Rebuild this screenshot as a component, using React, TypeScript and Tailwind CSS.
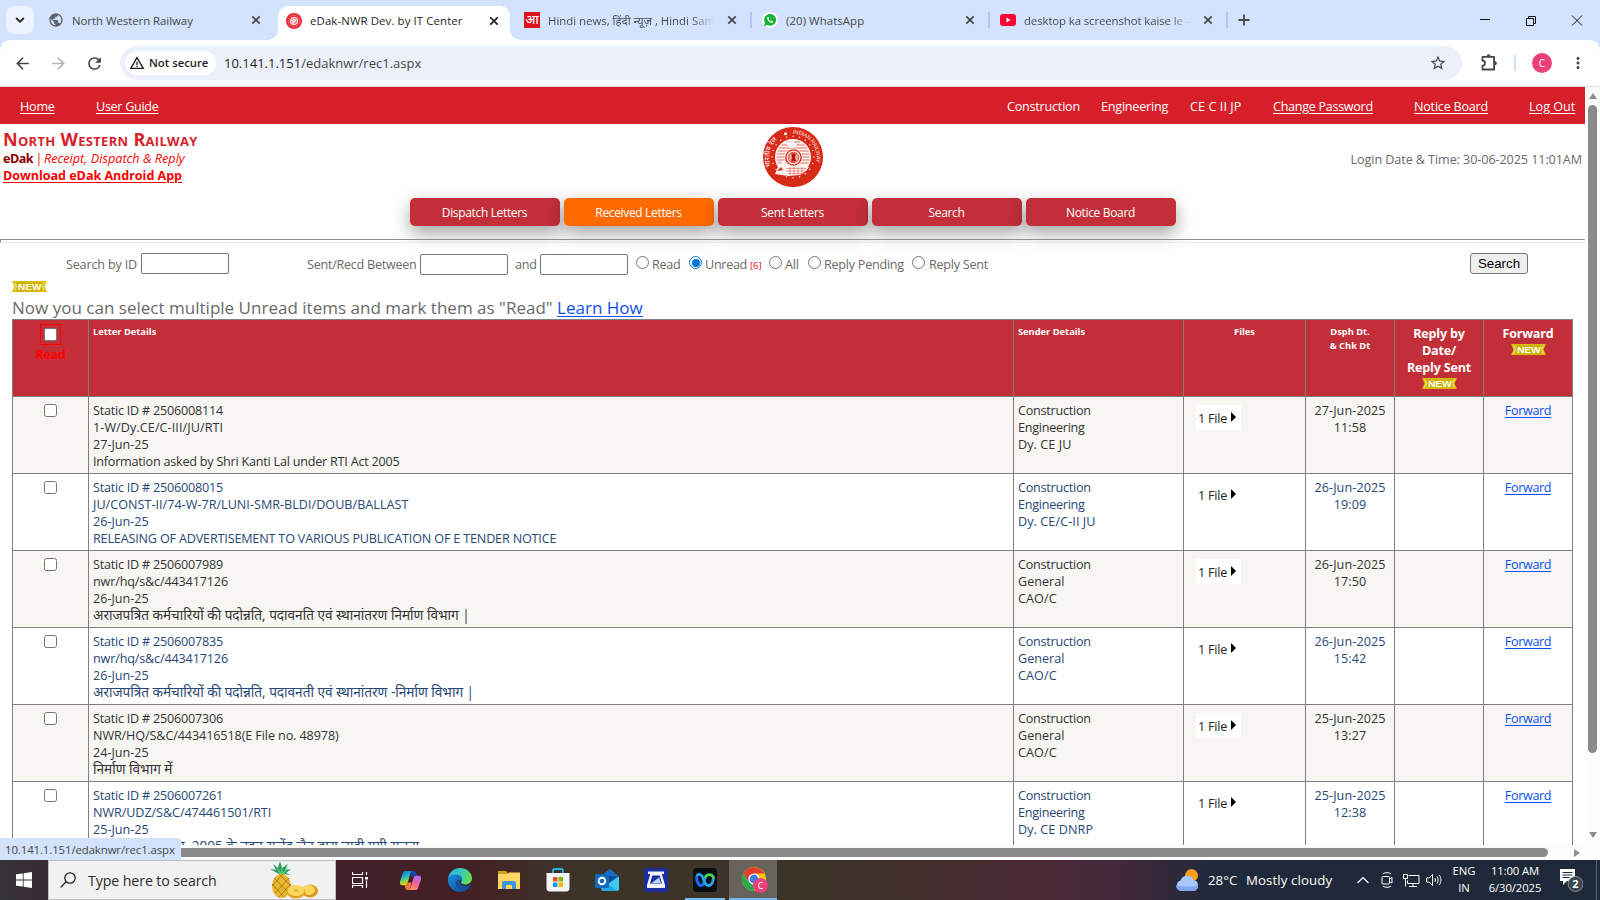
import React from "react";
import { IoLogoWhatsapp } from "react-icons/io";
import { MdStarBorder, MdRefresh, MdArrowBack, MdArrowForward, MdMoreVert, MdWarningAmber, MdPublic } from "react-icons/md";

const svg = "shrink-0 block";

function RailLogo({ className }: { className: string }) {
  const dots = Array.from({ length: 20 }, (_, i) => (i * Math.PI) / 10);
  return (
    <svg viewBox="0 0 60 60" className={className}>
      <defs>
        <path id="arcL" d="M8 39.500 A24 24 0 0 1 23 7.800" />
        <path id="arcR" d="M30 6.800 A23.300 23.300 0 0 1 52.500 36.500" />
      </defs>
      <circle cx="30" cy="30" r="30" fill="#d82a18" />
      {dots.map((a) => (
        <circle key={a} cx={30 + 20.8 * Math.cos(a)} cy={30 + 20.8 * Math.sin(a)} r="0.8" fill="#f7cfc9" />
      ))}
      <circle cx="22.500" cy="6.800" r="1.500" fill="#fff" />
      <text fontSize="7" fill="#fff" fontFamily="Noto Sans, Open Sans, sans-serif">
        <textPath href="#arcL">भारतीय रेल</textPath>
      </text>
      <text fontSize="5.600" fill="#fbe3df" fontFamily="Liberation Sans, sans-serif">
        <textPath href="#arcR" textLength="42">INDIAN RAILWAY</textPath>
      </text>
      <circle cx="30" cy="30" r="18" fill="#fdf3f1" />
      {[15, 18, 21, 24, 27, 30, 33, 36].map((y) => {
        const h = Math.sqrt(16.5 * 16.5 - (y - 30) * (y - 30));
        return <line key={y} x1={30 - h} x2={30 + h} y1={y} y2={y} stroke="#e0604f" strokeWidth="0.9" />;
      })}
      <path d="M23 15l7-1 5 6-8 1z" fill="#fff" />
      <circle cx="30.500" cy="30.500" r="9" fill="#fdf3f1" />
      <circle cx="30.500" cy="30.500" r="7.600" fill="none" stroke="#d82a18" strokeWidth="1.400" />
      <circle cx="30.500" cy="30.500" r="5.300" fill="#f0a59b" stroke="#d82a18" strokeWidth="0.800" />
      <path d="M28 26.500h5l-1.200 3.500 1.200 4.500h-5l1.200-4.500z" fill="#b81208" />
      <path d="M12 47l3-7 6-7 3 6 14 1 8 0-3 4-6 4-12 1z" fill="#fdf3f1" />
      <path d="M23 41.500h20M23 44h19M25 46.500h14M27 40v8M31 40v8M35 40v8M39 40v7" stroke="#e0604f" strokeWidth="0.600" />
      <path d="M15 43l3-3 2 3-5 1z" fill="#d82a18" />
    </svg>
  );
}

function Close({ active = false }: { active?: boolean }) {
  return (
    <svg viewBox="0 0 10 10" className={`${svg} size-2.5`}>
      <path d="M1.300 1.300L8.700 8.700M8.700 1.300L1.300 8.700" stroke={active ? "#1f1f1f" : "#444746"} strokeWidth="1.700" />
    </svg>
  );
}

function TabStrip() {
  const title = "overflow-hidden whitespace-nowrap text-[11.400px] leading-5 shrink-0 pt-px";
  const sep = "h-4 w-0.5 shrink-0 bg-[#a8c7fa]";
  return (
    <div className="flex h-10 shrink-0 items-center bg-[#d3e3fd] text-[#444746]">
      <div className="ml-1.5 flex size-7 shrink-0 items-center justify-center rounded-[9px] bg-[#ecf3fe]">
        <svg viewBox="0 0 10 10" className="size-2.5"><path d="M1.200 3L5 6.800 8.800 3" fill="none" stroke="#1f1f1f" strokeWidth="1.800" /></svg>
      </div>
      <MdPublic className="ml-3.5 size-4 shrink-0 text-[#5f6368]" />
      <div className={`${title} ml-2 w-[179px] tracking-[-0.03px]`}>North Western Railway</div>
      <Close />
      <div className="relative ml-[17px] flex h-[34px] w-[232px] shrink-0 items-center self-end rounded-t-[10px] bg-white">
        <svg viewBox="0 0 10 10" className="absolute bottom-0 -left-2.5 size-2.5"><path d="M0 10A10 10 0 0 0 10 0V10z" fill="#fff" /></svg>
        <svg viewBox="0 0 10 10" className="absolute -right-2.5 bottom-0 size-2.5"><path d="M10 10A10 10 0 0 1 0 0V10z" fill="#fff" /></svg>
        <svg viewBox="0 0 16 16" className={`${svg} mb-[5px] ml-2 size-4`}>
          <circle cx="8" cy="8" r="8" fill="#ea2330" />
          <circle cx="8" cy="8" r="5.800" fill="none" stroke="#fbd0d2" strokeWidth="0.800" strokeDasharray="1 1" />
          <circle cx="8" cy="8" r="3.800" fill="#f58d92" stroke="#fff" strokeWidth="0.900" />
          <path d="M7 11V6.500h2v2H7" fill="none" stroke="#fff" />
        </svg>
        <div className={`${title} mb-1.5 ml-2 w-[179px] pt-[2px] tracking-[0.11px] text-[#1f1f1f]`}>eDak-NWR Dev. by IT Center</div>
        <div className="mb-1.5 pt-px"><Close active /></div>
      </div>
      <div className="ml-[14px] flex size-4 shrink-0 items-center justify-center bg-[#d7151c] font-['Noto_Sans',sans-serif] text-[12.500px] leading-4 font-medium text-white">आ</div>
      <div className={`${title} ml-2 w-[167px] bg-gradient-to-r from-[#444746] from-86% to-[#44474600] bg-clip-text text-transparent`}>Hindi news, हिंदी न्यूज़ , Hindi Samachar</div>
      <div className="ml-3"><Close /></div>
      <div className={`${sep} ml-[13px]`} />
      <div className="ml-2.5 flex size-4 shrink-0 items-center justify-center rounded-full bg-white">
        <IoLogoWhatsapp className="size-3.5 text-[#17b43c]" />
      </div>
      <div className={`${title} ml-2 w-[179px] tracking-[0.08px]`}>(20) WhatsApp</div>
      <Close />
      <div className={`${sep} ml-[13px]`} />
      <svg viewBox="0 0 16 16" className={`${svg} ml-2.5 size-4`}>
        <rect y="2" width="16" height="12" rx="3" fill="#ff0033" /><path d="M6.300 5.500L10.600 8l-4.300 2.500z" fill="#fff" />
      </svg>
      <div className={`${title} ml-2 w-[167px] bg-gradient-to-r from-[#444746] from-88% to-[#44474600] bg-clip-text tracking-[-0.1px] text-transparent`}>desktop ka screenshot kaise le - YouTube</div>
      <div className="ml-3"><Close /></div>
      <div className={`${sep} ml-[13px]`} />
      <svg viewBox="0 0 12 12" className={`${svg} ml-2.5 size-3`}><path d="M6 .5v11M.5 6h11" stroke="#444746" strokeWidth="1.800" /></svg>
      <svg viewBox="0 0 110 12" className={`${svg} mr-4 ml-auto h-3 w-[110px]`} fill="none" stroke="#111">
        <path d="M6 5.500h10" />
        <path d="M52.500 4.500h7v7h-7zM54.500 4.500v-2h7v7h-2" />
        <path d="M98 1.500l10 10M108 1.500l-10 10" />
      </svg>
    </div>
  );
}

function Toolbar() {
  return (
    <div className="bg-[#d3e3fd]">
      <div className="flex h-[47px] shrink-0 items-start rounded-t-[10px] border-b border-[#dcdfe3] bg-white pt-1.5 text-[#444746]">
        <div className="flex h-[34px] w-[120px] shrink-0 items-center">
          <MdArrowBack className="ml-[12.5px] size-[19px]" />
          <MdArrowForward className="ml-[17px] size-[19px] text-[#b4b5b5]" />
          <MdRefresh className="ml-[17px] size-[19px]" />
        </div>
        <div className="flex h-[34px] w-[1342px] shrink-0 items-center rounded-full bg-[#ecf0fa] pr-[15px] pl-[5px]">
          <div className="flex h-6 w-[91px] items-center rounded-full bg-white pl-[4px]">
            <MdWarningAmber className="size-4 shrink-0 text-[#1f1f1f]" />
            <span className="ml-1 text-[11.300px] font-semibold whitespace-nowrap text-[#1f1f1f]">Not secure</span>
          </div>
          <div className="ml-2 pt-px text-[13px] text-[#444746]"><span className="text-[#1f1f1f]">10.141.1.151</span>/edaknwr/rec1.aspx</div>
          <MdStarBorder className="ml-auto size-[18px]" />
        </div>
        <div className="flex h-[34px] flex-1 items-center">
          <svg viewBox="0 0 20 20" className="ml-[17px] size-5 shrink-0" fill="none" stroke="#444746" strokeWidth="1.800"><path d="M3.500 3.900h11.600v12.600H3.500v-3.800a2.500 2.500 0 0 0 0-5z" strokeLinejoin="round" /><path d="M7.600 3.200a2 2 0 0 1 4 0zM15.900 8.200a2 2 0 0 1 0 4z" fill="#444746" stroke="none" /></svg>
          <div className="ml-[15px] h-4 w-0.5 bg-[#d3e3fd]" />
          <div className="ml-4 flex size-5 items-center justify-center rounded-full bg-[#ec407a] text-[10px] text-white">C</div>
          <MdMoreVert className="ml-[17px] size-[18px]" />
        </div>
      </div>
    </div>
  );
}

function NewBadge({ className = "" }: { className?: string }) {
  return (
    <svg viewBox="0 0 35 11" className={`block h-[11px] w-[35px] ${className}`}>
      <path d="M0 0h35l-2.500 5.500L35 11H0l2.500-5.500z" fill="#d8bd05" />
      <path d="M5 1h25v9H5z" fill="#cfb200" />
      <path d="M2.500 1.500l2 4-2 4M32.500 1.500l-2 4 2 4" stroke="#fff4b0" fill="none" strokeWidth="0.800" />
      <text x="6" y="9" fontSize="9.500" fontWeight="bold" fill="#fff" textLength="23.500" lengthAdjust="spacingAndGlyphs" fontFamily="Liberation Sans, sans-serif">NEW</text>
    </svg>
  );
}

function SiteHeader() {
  const a = "shrink-0 whitespace-nowrap underline underline-offset-2";
  const b = "shrink-0 whitespace-nowrap";
  const buttons = ["Dispatch Letters", "Received Letters", "Sent Letters", "Search", "Notice Board"];
  return (
    <>
      <div className="flex h-[37px] shrink-0 items-center bg-[#d71f29] pt-[3px] pl-5 text-[12.600px] tracking-[-0.22px] text-white">
        <div className={`${a} w-[76px]`}>Home</div>
        <div className={`${a} tracking-[-0.3px]`}>User Guide</div>
        <div className="ml-auto flex">
          <div className={`${b} w-[94px]`}>Construction</div>
          <div className={`${b} w-[89px]`}>Engineering</div>
          <div className={`${b} w-[83px] tracking-[0.08px]`}>CE C II JP</div>
          <div className={`${a} w-[141px] tracking-[-0.3px]`}>Change Password</div>
          <div className={`${a} w-[115px]`}>Notice Board</div>
          <div className={`${a} w-[56px] tracking-normal`}>Log Out</div>
        </div>
      </div>
      <div className="flex h-[74px] shrink-0 items-start justify-between pt-[3px] pr-[3px] pl-[3px]">
        <div className="w-[760px] whitespace-nowrap">
          <div className="pt-[2px] pb-px text-[18px] leading-[20px] font-bold tracking-[0.3px] text-[#d71f29] [font-variant-caps:small-caps]">North Western Railway</div>
          <div className="text-[12.600px] leading-[17px] text-[#e00]"><b className="tracking-[-0.5px] text-[#8b0000]">eDak</b><span className="tracking-[-0.9px]"> | </span><i className="tracking-[0.04px] text-[#f00]">Receipt, Dispatch &amp; Reply</i></div>
          <div className="text-[12.600px] leading-[17px] font-bold tracking-[-0.05px] text-[#f00] underline underline-offset-2">Download eDak Android App</div>
        </div>
        <RailLogo className="size-[60px] shrink-0" />
        <div className="flex-1 pt-6 text-right text-[12.600px] leading-[18px] tracking-[-0.08px] text-[#696969]">Login Date &amp; Time: 30-06-2025 11:01AM</div>
      </div>
      <div className="flex h-7 shrink-0 gap-1 pl-[410px] text-[12px] tracking-[-0.34px] text-white">
        {buttons.map((t) => (
          <div key={t} className={`flex w-[150px] items-center justify-center rounded-[5px] pt-0.5 pr-px shadow-[0_8px_16px_0_rgba(0,0,0,0.2),0_6px_20px_0_rgba(0,0,0,0.19)] ${t === "Received Letters" ? "bg-[#ff6a00]" : "bg-[#c22f38]"}`}>{t}</div>
        ))}
      </div>
      <div className="relative mt-[13px] h-1 w-[1585px] shrink-0 border border-t-[#8d8d8d] border-r-[#eee] border-b-[#e9e9e9] border-l-[#8d8d8d]" />
    </>
  );
}

function Radio({ on = false, className = "" }: { on?: boolean; className?: string }) {
  return (
    <span className={`mb-[3px] flex size-[13px] shrink-0 items-center justify-center rounded-full border bg-white ${on ? "border-[#0075d8]" : "border-[#767676]"} ${className}`}>
      {on && <span className="size-2 rounded-full bg-[#0075d8]" />}
    </span>
  );
}

function SearchRow() {
  const field = "h-[21px] w-[88px] shrink-0 rounded-xs border border-[#767676] bg-white";
  const t = "shrink-0 whitespace-nowrap pt-[3px]";
  return (
    <div className="flex h-[42px] shrink-0 items-center pl-[66px] text-[12.600px] tracking-[-0.18px] text-[#696969]">
      <div className={`${t} w-[75px]`}>Search by ID</div>
      <div className={`${field} mb-0.5`} />
      <div className={`${t} ml-[78px] w-[113px] tracking-[-0.26px]`}>Sent/Recd Between</div>
      <div className={field} />
      <div className={`${t} ml-[7px] w-[25px]`}>and</div>
      <div className={field} />
      <Radio className="ml-2" /><div className={`${t} ml-[3px] w-[37px] tracking-[-0.3px]`}>Read</div>
      <Radio on /><div className={`${t} ml-[3px] w-[45px] tracking-[-0.3px]`}>Unread</div>
      <div className={`${t} mt-px w-[19px] text-[9.500px] tracking-normal text-[#d00]`}>[6]</div>
      <Radio /><div className={`${t} ml-[3px] w-[23px]`}>All</div>
      <Radio /><div className={`${t} ml-[3px] w-[88px] tracking-[-0.25px]`}>Reply Pending</div>
      <Radio /><div className={`${t} ml-1 tracking-[-0.25px]`}>Reply Sent</div>
      <div className="mr-[57px] mb-0.5 ml-auto flex h-[21px] w-[58px] items-center justify-center rounded-[3px] border border-[#767676] bg-[#efefef] pt-px font-['Liberation_Sans',Arial,sans-serif] text-[13.300px] tracking-normal text-black">Search</div>
    </div>
  );
}

const wide = "tracking-[0.08px]";
const none = "tracking-normal";
const hindi = "-mt-px text-[13.600px] tracking-[-0.01px]";
const rows = [
  { id: "2506008114", ref: "1-W/Dy.CE/C-III/JU/RTI", refCls: "tracking-[0.08px]", date: "27-Jun-25", subj: "Information asked by Shri Kanti Lal under RTI Act 2005", subjCls: "tracking-[-0.22px]", dept: "Engineering", who: "Dy. CE JU", d: "27-Jun-2025", t: "11:58" },
  { id: "2506008015", ref: "JU/CONST-II/74-W-7R/LUNI-SMR-BLDI/DOUB/BALLAST", refCls: "tracking-[0.02px]", date: "26-Jun-25", subj: "RELEASING OF ADVERTISEMENT TO VARIOUS PUBLICATION OF E TENDER NOTICE", subjCls: "tracking-[-0.17px]", dept: "Engineering", who: "Dy. CE/C-II JU", d: "26-Jun-2025", t: "19:09" },
  { id: "2506007989", ref: "nwr/hq/s&c/443417126", refCls: "tracking-[-0.15px]", date: "26-Jun-25", subj: "अराजपत्रित कर्मचारियों की पदोन्नति, पदावनति एवं स्थानांतरण निर्माण विभाग |", subjCls: hindi, dept: "General", who: "CAO/C", d: "26-Jun-2025", t: "17:50" },
  { id: "2506007835", ref: "nwr/hq/s&c/443417126", refCls: "tracking-[-0.15px]", date: "26-Jun-25", subj: "अराजपत्रित कर्मचारियों की पदोन्नति, पदावनती एवं स्थानांतरण -निर्माण विभाग |", subjCls: hindi, dept: "General", who: "CAO/C", d: "26-Jun-2025", t: "15:42" },
  { id: "2506007306", ref: "NWR/HQ/S&C/443416518(E File no. 48978)", refCls: "tracking-[-0.1px]", date: "24-Jun-25", subj: "निर्माण विभाग में", subjCls: hindi, dept: "General", who: "CAO/C", d: "25-Jun-2025", t: "13:27" },
  { id: "2506007261", ref: "NWR/UDZ/S&C/474461501/RTI", refCls: "tracking-[-0.07px]", date: "25-Jun-25", subj: "सूचना का अधिकार, 2005 के तहत राजेंद्र जैन द्वारा चाही गयी सूचना", subjCls: hindi, dept: "Engineering", who: "Dy. CE DNRP", d: "25-Jun-2025", t: "12:38" },
];

const grid = "grid h-[77px] shrink-0 grid-cols-[76px_925px_170px_122px_89px_89px_90px] border-b border-[#808080]";
const cell = "border-l border-[#808080] pt-[5px] last:border-r whitespace-nowrap";
const small = "text-[9.300px] leading-[14px]";

function LetterTable() {
  return (
    <div className="ml-3 flex w-[1561px] shrink-0 flex-col border-t border-[#808080] text-[12.600px] leading-[17px]">
      <div className={`${grid} bg-[#c22f38] text-center font-bold text-white`}>
        <div className={`${cell} flex flex-col items-center`}>
          <div className="-mt-px flex size-[21px] items-center justify-center border border-[#f00]"><div className="size-[13px] rounded-xs border border-[#767676] bg-white" /></div>
          <div className="mt-px tracking-[-0.3px] text-[#f00]">Read</div>
        </div>
        <div className={`${cell} ${small} pl-1 text-left`}>Letter Details</div>
        <div className={`${cell} ${small} pl-1 text-left`}>Sender Details</div>
        <div className={`${cell} ${small}`}>Files</div>
        <div className={`${cell} ${small}`}>Dsph Dt.<br />&amp; Chk Dt</div>
        <div className={`${cell} tracking-[-0.2px]`}>Reply by<br />Date/<br />Reply Sent<NewBadge className="mx-auto mt-[2px]" /></div>
        <div className={`${cell} tracking-[-0.2px]`}>Forward<NewBadge className="mx-auto mt-[2px]" /></div>
      </div>
      {rows.map((r, i) => (
        <div key={r.id} className={`${grid} ${i % 2 ? "bg-white text-[#284775]" : "bg-[#f7f6f3] text-[#333333]"}`}>
          <div className={`${cell} pt-[7px]`}><div className="mx-auto size-[13px] rounded-[2.500px] border border-[#767676] bg-white" /></div>
          <div className={`${cell} pl-1`}>
            <div className="tracking-[-0.22px]">Static ID # {r.id}</div>
            <div className={r.refCls}>{r.ref}</div>
            <div>{r.date}</div>
            <div className={r.subjCls}>{r.subj}</div>
          </div>
          <div className={`${cell} pl-1`}>
            <div className="tracking-[-0.24px]">Construction</div>
            <div className={r.dept === "General" ? none : "tracking-[-0.26px]"}>{r.dept}</div>
            <div className={wide}>{r.who}</div>
          </div>
          <div className={`${cell} pl-3`}>
            <div className="mt-[3px] flex h-[25px] w-[45px] items-center bg-white pt-0.5 pl-[2px] text-[#222]">
              <span className="w-[33px] tracking-[-0.2px]">1 File</span>
              <svg viewBox="0 0 5 10" className="mb-[3px] h-2.5 w-[5px] shrink-0"><path d="M0 0L5 5 0 10z" fill="#000" /></svg>
            </div>
          </div>
          <div className={`${cell} text-center tracking-[0.1px]`}>{r.d}<br />{r.t}</div>
          <div className={cell} />
          <div className={`${cell} text-center tracking-[-0.36px] text-[#0a50f0] underline underline-offset-2`}>Forward</div>
        </div>
      ))}
    </div>
  );
}

function Taskbar() {
  const slot = "flex h-10 w-[49px] shrink-0 items-center justify-center";
  return (
    <div className="flex h-10 shrink-0 items-center bg-[linear-gradient(90deg,#333238_0,#3a2a30_60px,#431f28_340px,#431f25_460px,#3d3227_560px,#3a3527_780px,#42302c_900px,#4a2834_1040px,#41283a_1120px,#20293a_1210px,#1d2838_1600px)] text-white">
      <div className="flex w-12 shrink-0 justify-center">
        <svg viewBox="0 0 16 16" className="size-4" fill="#fff"><path d="M0 2.300L6.800 1.400V7.600H0zM7.600 1.300L16 0V7.600H7.600zM0 8.400h6.800v6.200L0 13.700zM7.600 8.400H16V16l-8.400-1.300z" /></svg>
      </div>
      <div className="flex h-10 w-72 shrink-0 items-center border border-[#bdbdbd] bg-[#f1f1f1] text-[#2b2b2b]">
        <svg viewBox="0 0 16 16" className="ml-[11px] size-4" fill="none" stroke="#222" strokeWidth="1.300"><circle cx="10" cy="6" r="5.200" /><path d="M6.200 9.800L.6 15.400" /></svg>
        <div className="ml-3 w-[181px] pt-px text-[14.200px] tracking-[-0.1px] whitespace-nowrap">Type here to search</div>
        <svg viewBox="0 0 50 38" className="h-[38px] w-[50px]">
          <path d="M10 13L1 8l6 1-3-6 5 4 2-7 2 7 6-4-3 6 6-1-5 4 5 2-8-1z" fill="#2a9a58" />
          <path d="M11 14L6 5l6 6 0-8 2 8 5-5-4 8z" fill="#59c47c" />
          <ellipse cx="12.500" cy="25" rx="9.500" ry="12" fill="#e8b730" />
          <path d="M5 17l14 14M3 23l12 13M10 13l12 12M20 17L6 32M22 23L10 36M14 13L3 25" stroke="#a87614" strokeWidth="0.900" />
          <ellipse cx="41" cy="30" rx="8" ry="6.500" fill="#d99a1c" /><ellipse cx="40" cy="29" rx="6" ry="5" fill="#fbd65f" />
          <ellipse cx="27" cy="31" rx="9.500" ry="6.500" fill="#dd9f1e" /><ellipse cx="27" cy="29.500" rx="8.500" ry="5.500" fill="#fbd65f" /><ellipse cx="27" cy="29.500" rx="2.500" ry="1.500" fill="#eab63a" />
        </svg>
      </div>
      <div className={slot}>
        <svg viewBox="0 0 16 16" className="mr-px size-4" fill="none" stroke="#fff"><path d="M.5 0v2.500h10V0M.5 5.500h10v6H.5zM.5 16v-2.500h10V16M14.500 0v3M14.500 8.500V16" strokeWidth="1.200" /><path d="M13 5h3v2.500h-3z" fill="#fff" stroke="none" /></svg>
      </div>
      <div className="flex h-10 w-[50px] shrink-0 items-center justify-center">
        <svg viewBox="0 0 24 24" className="ml-px size-[23px]">
          <defs>
            <linearGradient id="c1" x1="0" y1="0" x2="0.300" y2="1"><stop stopColor="#1c6be0" /><stop offset=".45" stopColor="#19b5c9" /><stop offset=".8" stopColor="#9fd13b" /><stop offset="1" stopColor="#f5d21c" /></linearGradient>
            <linearGradient id="c2" x1="0.600" y1="0" x2="0.200" y2="1"><stop stopColor="#b76bf0" /><stop offset=".5" stopColor="#f0609a" /><stop offset="1" stopColor="#ff9a52" /></linearGradient>
          </defs>
          <path d="M13 2h2.500c1.500 0 2 1 2.500 2.500L19 8h-6z" fill="#1b45b8" />
          <path d="M6.500 2H14c-1.500.5-2 2-2.500 4L9 14c-.6 2-1.500 3-3.500 3H3.500C1 17 .5 15 1.200 12.500L4 4.500C4.600 3 5 2 6.500 2z" fill="url(#c1)" />
          <path d="M17.500 22H10c1.500-.5 2-2 2.500-4L15 10c.6-2 1.500-3 3.500-3h2c2.500 0 3 2 2.300 4.500L20 19.500c-.6 1.500-1 2.500-2.500 2.500z" fill="url(#c2)" />
          <path d="M11 22H9c-1.500 0-2-1-2.500-2.500L6 17c2 0 2.500-1 3-3h4z" fill="#f27a3a" />
        </svg>
      </div>
      <div className={slot}>
        <svg viewBox="0 0 24 24" className="size-6">
          <defs>
            <linearGradient id="e1" x1="0" y1="0.200" x2="1" y2="0.500"><stop stopColor="#2fb8e6" /><stop offset=".5" stopColor="#35c7c0" /><stop offset="1" stopColor="#62e04f" /></linearGradient>
            <linearGradient id="e2" x1="0" y1="0" x2="1" y2="1"><stop stopColor="#1a8fe0" /><stop offset="1" stopColor="#0c4fa0" /></linearGradient>
          </defs>
          <path d="M0 11C1 4 6 0 12 0c7 0 12 5 12 10 0 4-3 6.500-6.500 6.500-3 0-4.500-1.200-4.500-2 0-.7 1-1 1-3 0-2-2-3.500-5-3.500-5 0-9 3-9 3z" fill="url(#e1)" />
          <path d="M0 12C0 8 4 6.500 8 6.500c4 0 6 2 6 4.500 0 1-.4 1.700-.8 2.200C12 11 8 12 8 16c0 4 4 8 7.500 7.500C7 25.500 0 20 0 12z" fill="url(#e2)" />
          <path d="M8 16c0-2.500 2-4 4-4-.8 3 1.500 6 5.500 6 2 0 3.500-.7 4.500-1.300.5-.3 1 .2.700.7C20 21.500 17 23.500 15 23.500 11 23.500 8 20 8 16z" fill="#14539f" />
        </svg>
      </div>
      <div className={slot}>
        <svg viewBox="0 0 22 18" className="h-[18px] w-[22px]"><path d="M0 0h8l2 2.500H0z" fill="#e2a10c" /><path d="M0 2.500L10 2.500 11 1.500h11V18H0z" fill="#fdd663" /><path d="M4 18v-6c0-1.200.8-2 2-2h10c1.200 0 2 .8 2 2v6h-4v-4H8v4z" fill="#3a96dd" /></svg>
      </div>
      <div className={slot}>
        <svg viewBox="0 0 24 24" className="size-6"><path d="M7 7V2.500C7 1.500 7.500 1 8.500 1h7c1 0 1.500.5 1.500 1.500V7" fill="none" stroke="#25b2ee" strokeWidth="1.800" /><path d="M.5 5h23v15c0 2-1 3.500-3 3.500h-17c-2 0-3-1.500-3-3.500z" fill="#f3f4f6" /><path d="M7 9h4.500v4.500H7z" fill="#f25022" /><path d="M12.500 9H17v4.500h-4.500z" fill="#7fba00" /><path d="M7 14.500h4.500V19H7z" fill="#00a4ef" /><path d="M12.500 14.500H17V19h-4.500z" fill="#ffb900" /></svg>
      </div>
      <div className={slot}>
        <svg viewBox="0 0 24 24" className="size-6"><path d="M6 8l9-7 8 7v13c0 1-1 2-2 2H8c-1 0-2-1-2-2z" fill="#1066b5" /><path d="M7 7l8-6 8 7v2l-9 7z" fill="#1a6fc2" /><path d="M15 14.500l9-6V21c0 1-1 2-2 2H8z" fill="#41c8f5" /><path d="M6 12l17 10.500c-.5.400-1 .5-2 .5H8c-1 0-2-1-2-2z" fill="#27a8ea" /><path d="M14 8h8l-8 7z" fill="#0b4a94" /><rect y="6" width="14" height="14" rx="1.500" fill="#0f6cbd" /><circle cx="7" cy="13" r="3.300" fill="none" stroke="#fff" strokeWidth="1.900" /></svg>
      </div>
      <div className={slot}>
        <svg viewBox="0 0 24 24" className="size-6"><rect width="24" height="24" rx="2" fill="#1a2c9e" /><path d="M4 3.500h16v2.500h-2.200L21 17v3H3v-3L6.200 6H4z" fill="#eef2fd" /><path d="M8.400 7.500h7.200L18 15.500H6z" fill="#1a2c9e" /><path d="M15 9.500l2 5.500H7.500z" fill="#c3d0f6" /></svg>
      </div>
      <div className={slot}>
        <div className="flex h-10 w-10 items-center justify-center border-b-2 border-[#76b9ed] pt-0.5">
          <svg viewBox="0 0 24 24" className="size-6">
            <rect width="24" height="24" rx="4" fill="#0b0f14" />
            <path d="M3.800 8.500C3.200 11 5 17.500 8 17.500c2.800 0 3.600-4.500 4-7.500" fill="none" stroke="#1a6cf5" strokeWidth="3" strokeLinecap="round" />
            <path d="M4.500 7c2-1.200 4.200-.5 5.500 3 1.300 3.800 2 7.500 5.500 7.500 3.200 0 4.800-4 4.900-8" fill="none" stroke="#24a6e8" strokeWidth="2.800" strokeLinecap="round" />
            <path d="M12.500 9c1.500-3 6.500-3.500 7.900.5" fill="none" stroke="#3fd45c" strokeWidth="2.800" strokeLinecap="round" />
          </svg>
        </div>
      </div>
      <div className="flex h-10 w-12 shrink-0 items-center justify-center border-b-2 border-[#76b9ed] bg-[#65635a]">
        <svg viewBox="0 0 26 26" className="mt-0.5 ml-1 size-[26px]">
          <circle cx="12" cy="12" r="12" fill="#fbc116" />
          <path d="M12 12L12 24A12 12 0 0 1 1.600 6L6.800 15z" fill="#2da94f" /><path d="M1.600 6A12 12 0 0 1 22.400 6.500H12L6.800 15z" fill="#e33b2e" />
          <circle cx="12" cy="12" r="5.600" fill="#fff" /><circle cx="12" cy="12" r="4.400" fill="#3f7de8" />
          <circle cx="18.500" cy="18.500" r="7.500" fill="#ec407a" />
          <text x="18.500" y="21.800" fontSize="9" textAnchor="middle" fill="#fff" fontFamily="Open Sans, sans-serif">C</text>
        </svg>
      </div>
      <div className="ml-auto flex shrink-0 items-center text-[13.300px] whitespace-nowrap">
        <svg viewBox="0 0 24 24" className="mr-[9px] size-6"><circle cx="16.500" cy="7.500" r="6.500" fill="#f6a01e" /><path d="M6 23a5.500 5.500 0 0 1-.5-10.500A7 7 0 0 1 18.500 12 5.600 5.600 0 0 1 18.500 23z" fill="#a9c8fa" /><path d="M6 23a5.500 5.500 0 0 1-5-6c3 2 18 2 22 0a5.500 5.500 0 0 1-4.500 6z" fill="#7ea9f2" /></svg>
        <div className="w-[38px] pt-px">28°C</div>
        <div className="w-[111px] pt-px tracking-[0.08px]">Mostly cloudy</div>
        <svg viewBox="0 0 12 8" className="h-2 w-3" fill="none" stroke="#fff" strokeWidth="1.200"><path d="M.5 7L6 1.500 11.500 7" /></svg>
        <svg viewBox="0 0 12 16" className="ml-3 h-4 w-3" fill="none" stroke="#fff"><rect x="1" y="4.500" width="7.500" height="7.500" rx="1" /><path d="M8.500 7l2.500-1.500v5.500L8.500 9.500M2 1.800c2-1.500 6-1.500 8 0M2 14.200c2 1.500 6 1.500 8 0" /></svg>
        <svg viewBox="0 0 17 15" className="ml-2.5 h-[15px] w-[17px]" fill="none" stroke="#fff"><path d="M5.500 2.500h10.500v8H4.500V7.500M6 13.500h8M10 10.500v3M.5 1.500h4v4h-4zM2.500 5.500v8" /></svg>
        <svg viewBox="0 0 16 14" className="ml-1.5 h-3.5 w-4" fill="none" stroke="#fff"><path d="M.5 5v4h2.500l3.500 3.500v-11L3 5zM8.800 5c.8 1 .8 3 0 4M11 3.500c1.500 2 1.500 5 0 7M13.200 2c2.300 3 2.300 7 0 10" /></svg>
        <div className="mb-0.5 ml-2 w-7 text-center text-[11.300px] leading-[17px]">ENG<br />IN</div>
        <div className="mb-0.5 ml-[9px] w-[56px] text-center text-[11.300px] leading-[17px] tracking-[-0.1px]">11:00 AM<br />6/30/2025</div>
        <svg viewBox="0 0 24 24" className="ml-4 size-6"><path d="M1 1h15v12H8l-4 4v-4H1z" fill="#fff" /><path d="M3.500 4.500h10M3.500 7h10M3.500 9.500h7" stroke="#1d2838" /><circle cx="16.500" cy="16" r="7.500" fill="#3c4653" stroke="#9aa0a8" strokeWidth="0.800" /><text x="16.500" y="20" fontSize="11" fontWeight="bold" textAnchor="middle" fill="#fff" fontFamily="Open Sans, sans-serif">2</text></svg>
        <div className="mr-[3px] ml-[13px] h-10 w-px bg-[#59626d]" />
      </div>
    </div>
  );
}

export default function App() {
  return (
    <div className="flex h-[900px] w-[1600px] flex-col overflow-hidden bg-white font-['Open_Sans','Noto_Sans',sans-serif]">
      <TabStrip />
      <Toolbar />
      <div className="relative flex h-[773px] shrink-0 flex-col">
        <div className="flex min-h-0 flex-1">
          <div className="flex w-[1585px] flex-col overflow-hidden">
            <SiteHeader />
            <SearchRow />
            <div className="flex h-[34px] shrink-0 flex-col pl-3">
              <NewBadge className="-mt-1 shrink-0" />
              <div className="mt-[3px] pt-px text-[17px] leading-[24px] tracking-[0.015px] whitespace-nowrap text-[#696969]">Now you can select multiple Unread items and mark them as "Read" <span className="text-[#0a50f0] underline underline-offset-2">Learn How</span></div>
            </div>
            <LetterTable />
          </div>
          <div className="flex w-[15px] shrink-0 flex-col items-center bg-[#fcfcfc] pt-1.5 pb-[7px]">
            <svg viewBox="0 0 8 6" className="h-1.5 w-2"><path d="M4 0l4 6H0z" fill="#8b8b8b" /></svg>
            <div className="mt-1.5 h-[648px] w-[9px] rounded-full bg-[#8b8b8b]" />
            <svg viewBox="0 0 8 6" className="mt-auto h-1.5 w-2"><path d="M0 0h8L4 6z" fill="#8b8b8b" /></svg>
          </div>
        </div>
        <div className="flex h-[15px] shrink-0 items-center bg-[#fcfcfc]">
          <div className="ml-4 h-[9px] w-[1532px] rounded-full bg-[#8b8b8b]" />
          <svg viewBox="0 0 6 8" className="ml-[26px] h-2 w-1.5"><path d="M0 0l6 4-6 4z" fill="#8b8b8b" /></svg>
        </div>
        <div className="absolute bottom-0 left-0 flex h-[22px] w-[181px] items-center rounded-tr-[4px] bg-[#d3e3fd] pt-0.5 pl-[5px] text-[11.400px] tracking-[-0.1px] whitespace-nowrap text-[#444746]">10.141.1.151/edaknwr/rec1.aspx</div>
      </div>
      <Taskbar />
    </div>
  );
}
